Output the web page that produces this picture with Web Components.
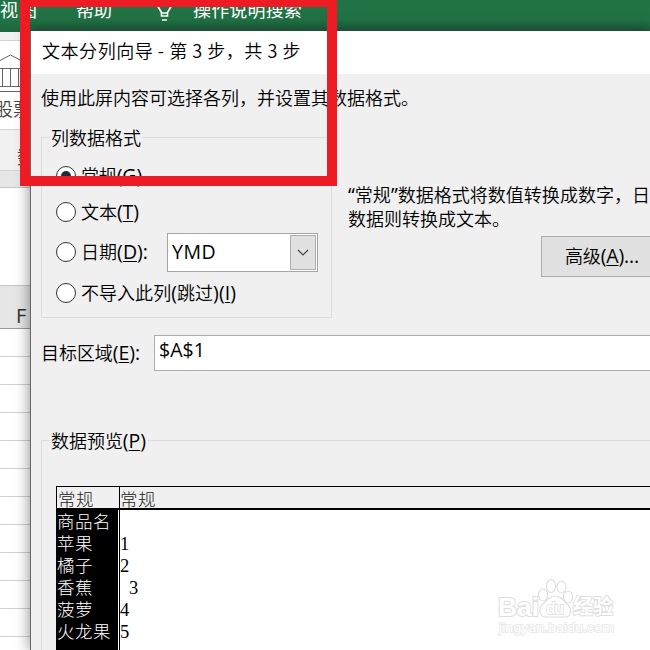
<!DOCTYPE html>
<html lang="zh-CN"><head><meta charset="utf-8"><title>文本分列向导</title>
<style>
html,body{margin:0;height:650px;overflow:hidden}
body{font:350 18px/24px "Noto Sans CJK SC",sans-serif;color:#000}
</style></head><body><wizard-screen></wizard-screen>
<script>
const define=(name,html,ready)=>customElements.define(name,class extends HTMLElement{
  connectedCallback(){
    if(this.shadowRoot)return;
    const t=document.createElement('template');t.innerHTML=html;
    this.attachShadow({mode:'open'}).append(t.content.cloneNode(true));
    if(ready)ready(this);
  }
});

// Text run spread evenly over the width given in "w".
define('fit-text',`<style>:host{display:inline-block;white-space:pre;line-height:24px;flex:none}
::slotted(i){font:normal 400 19.5px/20px "Open Sans",sans-serif}
::slotted(u){font:400 19.5px/20px "Open Sans",sans-serif;text-decoration:underline;text-decoration-thickness:1px;text-underline-offset:2px}</style><slot></slot>`,el=>{
  const w=+el.getAttribute('w');if(!w)return;
  const n=[...el.textContent].length;
  el.style.letterSpacing=((w-el.getBoundingClientRect().width)/n)+'px';
});

define('excel-backdrop',`<style>
:host{display:flex;flex-direction:column;height:650px;background:#fff;color:#444}
.bar{height:32px;box-sizing:border-box;background:linear-gradient(#217346 0 20px,#20653f 32px);color:#fff;display:flex;align-items:flex-start;flex:none;font-weight:400}
.bar fit-text{margin-top:-3px}
.a{margin-right:38px}.b{margin-right:45px}
svg{flex:none}
.gap{height:8px;background:#f1f1f1;border-bottom:1px solid #d2d2d2;flex:none}
.tool{height:88px;background:#fff;border-bottom:1px solid #d2d2d2;flex:none;overflow:hidden}
.bank{display:block;margin-top:12px}
.stock{margin:3px 0 0 -5px}
.group{height:41px;background:#f1f1f1;border-bottom:1px solid #d2d2d2;flex:none;padding-left:17px;box-sizing:border-box;padding-top:14px}
.strip{height:16px;background:#e6e6e6;border-bottom:1px solid #c6c6c6;flex:none}
.formula{height:97px;flex:none}
.head{height:44px;box-sizing:border-box;border-top:1px solid #c6c6c6;border-bottom:1px solid #999;background:#e6e6e6;flex:none;padding:18px 0 0 16px;font:400 20px/24px "Open Sans",sans-serif;color:#333}
.cells{flex:1;background:repeating-linear-gradient(#fff 0 27px,#d2d2d2 27px 28px)}
</style>
<div class="bar"><fit-text class="a" w="38">视图</fit-text><fit-text class="b" w="36">帮助</fit-text>
<svg width="36" height="24" fill="none" stroke="#fff" stroke-width="1.6"><path d="M-.5 4L4.5 12.5V16H10.5V12.5L15.5 4M5 20H10M4.5 13H10.5"/></svg><fit-text w="109">操作说明搜索</fit-text></div>
<div class="gap"></div>
<div class="tool"><svg class="bank" width="31" height="40" fill="none" stroke="#666"><path d="M-1 8L10.5 2L22 8V11M0 15.5H24M2.5 15V33M10.5 15V33M18.5 15V33M0 33.5H26M0 38.5H30"/></svg><fit-text class="stock" w="36">股票</fit-text></div>
<div class="group"><fit-text w="36">数据</fit-text></div><div class="strip"></div><div class="formula"></div><div class="head">F</div><div class="cells"></div>`);

define('radio-option',`<style>:host{display:flex;align-items:center;gap:6px;height:24px;flex:none}
::slotted(*){margin:-2px 0 0 -1px}
.o{width:20px;height:20px;box-sizing:border-box;border:1px solid #333;border-radius:50%;background:#fff;display:grid;place-items:center;flex:none}
:host([checked]) .o::after{content:"";width:10px;height:10px;border-radius:50%;background:#222b38}</style><span class="o"></span><slot></slot>`);

define('date-select',`<style>:host{display:flex;align-items:center;justify-content:space-between;width:151px;height:39px;box-sizing:border-box;border:1px solid #a5a5a5;background:#fff;padding:1px 1px 1px 4px;font:400 19.5px/24px "Open Sans",sans-serif}
::slotted(*){margin-top:-2px}
.b{width:26px;height:35px;box-sizing:border-box;border:1px solid #adadad;background:#e1e1e1;display:grid;place-items:center}</style><slot></slot><span class="b"><svg width="12" height="8" fill="none" stroke="#444" stroke-width="1.2"><path d="M1 1L6 6L11 1"/></svg></span>`);

define('group-box',`<style>:host{display:block;box-sizing:border-box;border:1px solid #dcdcdc;flex:none}
.t{display:flex;width:max-content;margin:-13px 0 0 8px;padding:0 2px 0 1px;background:#f0f0f0;height:24px}</style><div class="t"><slot name="title"></slot></div><slot></slot>`);

define('preview-table',`<style>:host{display:block;margin:34px 0 0 14px;font-size:17.5px;font-weight:300}
.h{display:grid;grid-template-columns:62px 1fr;height:24px;box-sizing:border-box;border:1px solid #000;border-right:0;border-bottom:2px solid #000;color:#222;background:#f0f0f0}
.h fit-text{line-height:23px}.h>*{padding-left:1px}.h>*+*{border-left:1px solid #000;padding-left:0}
.body{display:grid;grid-template-columns:62px 1fr;height:160px;background:#fff}
.k{background:#000;color:#fff;padding-left:1px}
.v{margin-left:1px;border-left:1px solid #000;padding:1px 0 0 0;font:400 18.5px/22px "Liberation Serif",serif}
.k>*,.v>*{display:block;height:22px;line-height:22px;white-space:pre}
.k fit-text{display:block;width:max-content}
.v .s{padding-left:9px}</style>
<div class="h"><span><fit-text w="36">常规</fit-text></span><span><fit-text w="36">常规</fit-text></span></div>
<div class="body"><div class="k"><fit-text w="54">商品名</fit-text><fit-text w="36">苹果</fit-text><fit-text w="36">橘子</fit-text><fit-text w="36">香蕉</fit-text><fit-text w="36">菠萝</fit-text><fit-text w="54">火龙果</fit-text></div>
<div class="v"><span></span><span>1</span><span>2</span><span class="s">3</span><span>4</span><span>5</span></div></div>`);

define('wizard-dialog',`<style>
:host{display:flex;flex-direction:column;box-sizing:border-box;width:620px;height:620px;border-left:1px solid #666;border-top:1px solid #234f37;background:#f0f0f0;box-shadow:0 0 14px #0007;overflow:hidden}
.title{height:43px;background:#fff;padding:7px 0 0 11px;box-sizing:border-box;flex:none}
.intro{padding:11px 0 0 10px;height:28px;flex:none}
.row{display:flex;height:205px;padding:0 0 0 10px;flex:none}
.left{width:291px;height:181px;margin-top:24px}
.opts{display:flex;flex-direction:column;padding-left:14px}
.r1{margin-top:15px}.r2{margin-top:12px}
.date{display:flex;align-items:flex-start;height:39px;margin-top:9px;gap:19px}
.date radio-option{margin-top:7px}
.r4{margin-top:9px}
.right{padding:69px 0 0 16px;width:310px;overflow:hidden;box-sizing:content-box}
.right fit-text{display:block;width:max-content}
.btn{display:flex;align-items:center;padding-left:23px;margin:6px 0 0 193px;width:130px;height:41px;box-sizing:border-box;border:1px solid #adadad;background:#e1e1e1}
.btn fit-text{margin-top:-3px}
.target{display:flex;align-items:center;margin-top:17px;padding-left:10px;height:36px;flex:none;gap:14px}
.target>fit-text{margin-top:-2px}
.input{flex:1;height:36px;box-sizing:border-box;border:1px solid #adadad;border-right:0;background:#fff;padding:1px 0 0 4px;font:400 19.5px/26px "Open Sans",sans-serif}
.preview{margin:69px 0 0 10px;height:250px;border-right:0}
</style>
<div class="title"><fit-text w="259">文本分列向导 - 第 3 步，共 3 步</fit-text></div>
<div class="intro"><fit-text w="378">使用此屏内容可选择各列，并设置其数据格式。</fit-text></div>
<div class="row"><group-box class="left"><fit-text slot="title" w="90">列数据格式</fit-text><div class="opts">
<radio-option checked class="r1"><fit-text w="61">常规<i>(</i><u>G</u><i>)</i></fit-text></radio-option>
<radio-option class="r2"><fit-text w="58">文本<i>(</i><u>T</u><i>)</i></fit-text></radio-option>
<div class="date"><radio-option><fit-text w="67">日期<i>(</i><u>D</u><i>):</i></fit-text></radio-option><date-select><fit-text w="44">YMD</fit-text></date-select></div>
<radio-option class="r4"><fit-text w="155">不导入此列<i>(</i>跳过<i>)(</i><u>I</u><i>)</i></fit-text></radio-option></div></group-box>
<div class="right"><fit-text w="302"><i>“</i>常规<i>”</i>数据格式将数值转换成数字，日</fit-text><fit-text w="162">数据则转换成文本。</fit-text><div class="btn"><fit-text w="74">高级<i>(</i><u>A</u><i>)...</i></fit-text></div></div></div>
<div class="target"><fit-text w="99">目标区域<i>(</i><u>E</u><i>):</i></fit-text><div class="input"><fit-text w="46">$A$1</fit-text></div></div>
<group-box class="preview"><fit-text slot="title" w="95">数据预览<i>(</i><u>P</u><i>)</i></fit-text><preview-table></preview-table></group-box>`);

define('baidu-mark',`<style>:host{display:block}text{font-family:"Liberation Sans","Noto Sans CJK SC",sans-serif;font-weight:700}</style>
<svg width="125" height="62" fill="#fff" stroke="#dedede" stroke-width="1.2">
<text x="3" y="41" font-size="26" textLength="41" lengthAdjust="spacingAndGlyphs" stroke-width="2" paint-order="stroke">Bai</text>
<ellipse cx="48" cy="20" rx="4.5" ry="6"/><ellipse cx="56" cy="11" rx="4.5" ry="6.5"/><ellipse cx="66.500" cy="12" rx="4.500" ry="6"/><ellipse cx="73" cy="22" rx="4.500" ry="6"/>
<path d="M60 21C54 21 52 26 48 29C43 33 44 42 51 42H70C77 42 77 33 72 29C68 25 66 21 60 21Z"/>
<text x="51" y="39" font-size="16" textLength="18" stroke-width="1.6" paint-order="stroke">du</text>
<text x="78" y="39" font-size="20" textLength="40" stroke-width="1.8" paint-order="stroke">经验</text>
<text x="4" y="57" font-size="13.500" textLength="115" lengthAdjust="spacingAndGlyphs" stroke="#e8e8e8" stroke-width="1.6" paint-order="stroke" style="font-weight:400">jingyan.baidu.com</text></svg>`);

define('wizard-screen',`<style>:host{display:block;position:relative;width:650px;height:650px;overflow:hidden}
wizard-dialog{position:absolute;left:30px;top:30px}
.frame{position:absolute;left:20px;top:-3px;width:317px;height:189px;box-sizing:border-box;border:10px solid #ed1c24}
baidu-mark{position:absolute;left:495px;top:575px}</style>
<excel-backdrop></excel-backdrop><wizard-dialog></wizard-dialog><baidu-mark></baidu-mark><div class="frame"></div>`);
</script></body></html>
